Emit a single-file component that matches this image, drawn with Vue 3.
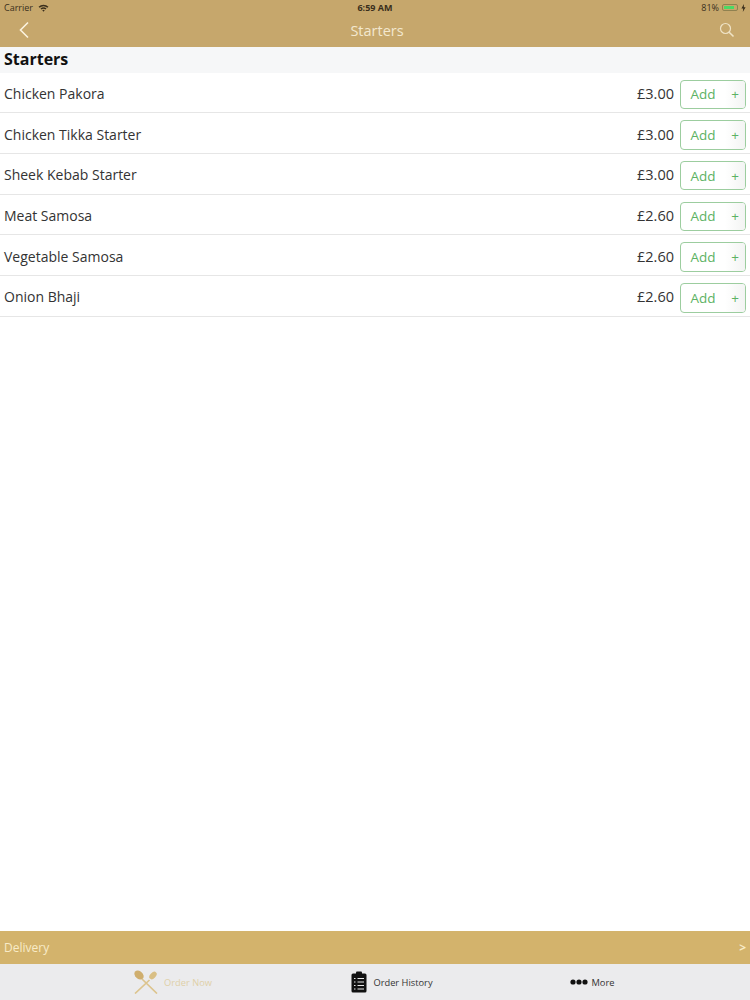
<template>
  <div class="screen">
    <header class="top">
      <div class="status">
        <div class="status-left">
          <span>Carrier</span>
          <svg class="wifi" width="11" height="8" viewBox="0 0 12 9">
            <path d="M0.4 3 A8 8 0 0 1 11.6 3 L10.3 4.3 A6.2 6.2 0 0 0 1.7 4.3 Z" fill="#3a2f1c" />
            <path d="M2.6 5.1 A5 5 0 0 1 9.4 5.1 L8.2 6.3 A3.3 3.3 0 0 0 3.8 6.3 Z" fill="#3a2f1c" />
            <path d="M4.6 7.1 A2 2 0 0 1 7.4 7.1 L6 8.6 Z" fill="#3a2f1c" />
          </svg>
        </div>
        <span class="clock">6:59 AM</span>
        <div class="status-right">
          <span>81%</span>
          <span class="battery"><span class="battery-fill"></span></span>
          <svg width="5" height="8" viewBox="0 0 5 8"><path d="M3 0 L0.4 4.6 H2.2 L1.8 8 L4.6 3.2 H2.8 Z" fill="#3a2f1c" /></svg>
        </div>
      </div>
      <div class="nav">
        <svg class="back" width="12" height="18" viewBox="0 0 12 18">
          <path d="M10 1.5 L2.5 9 L10 16.5" fill="none" stroke="#fbf3df" stroke-width="1.6" />
        </svg>
        <span class="nav-title">Starters</span>
        <svg class="search" width="16" height="16" viewBox="0 0 16 16">
          <circle cx="6.5" cy="6.5" r="5" fill="none" stroke="#efe3c6" stroke-width="1.2" />
          <path d="M10.2 10.2 L14.5 14.5" stroke="#efe3c6" stroke-width="1.6" />
        </svg>
      </div>
    </header>

    <main class="list">
      <h2 class="section">Starters</h2>
      <div v-for="item in items" :key="item.name" class="row">
        <span class="name">{{ item.name }}</span>
        <span class="price">£{{ item.price }}</span>
        <div class="add">
          <span class="add-label">Add</span>
          <span class="add-plus">+</span>
        </div>
      </div>
    </main>

    <div class="delivery">
      <span>Delivery</span>
      <span class="arrow">&gt;</span>
    </div>

    <nav class="tabs">
      <div class="tab tab-active">
        <svg width="24" height="24" viewBox="0 0 24 24">
          <path d="M1 23.5 L15.5 10 M23 23.5 L8 9" stroke="#dcc48e" stroke-width="1.7" />
          <ellipse cx="5" cy="5" rx="5.2" ry="3.8" transform="rotate(42 5 5)" fill="#cfae6e" />
          <ellipse cx="19" cy="5.5" rx="4.4" ry="2.8" transform="rotate(-45 19 5.5)" fill="#d9bf85" />
        </svg>
        <span>Order Now</span>
      </div>
      <div class="tab">
        <svg width="16" height="22" viewBox="0 0 16 22">
          <rect x="0.5" y="2.5" width="15" height="19" rx="1.5" fill="#111" />
          <rect x="5" y="0.5" width="6" height="3.5" rx="1" fill="#111" />
          <path d="M3 7.5 H4.5 M6.5 7.5 H13 M3 11 H4.5 M6.5 11 H13 M3 14.5 H4.5 M6.5 14.5 H13 M3 18 H4.5 M6.5 18 H13" stroke="#e8e8e8" stroke-width="1.1" />
        </svg>
        <span>Order History</span>
      </div>
      <div class="tab tab-more">
        <svg width="18" height="6" viewBox="0 0 18 6">
          <circle cx="3" cy="3" r="2.6" fill="#111" />
          <circle cx="9" cy="3" r="2.6" fill="#111" />
          <circle cx="15" cy="3" r="2.6" fill="#111" />
        </svg>
        <span>More</span>
      </div>
    </nav>
  </div>
</template>

<script setup>
const items = [
  { name: 'Chicken Pakora', price: '3.00' },
  { name: 'Chicken Tikka Starter', price: '3.00' },
  { name: 'Sheek Kebab Starter', price: '3.00' },
  { name: 'Meat Samosa', price: '2.60' },
  { name: 'Vegetable Samosa', price: '2.60' },
  { name: 'Onion Bhaji', price: '2.60' }
]
</script>

<style>
html, body { margin: 0; background: #fff; }
</style>

<style scoped>
.screen {
  width: 750px;
  height: 1000px;
  display: flex;
  flex-direction: column;
  font-family: "Open Sans", Lato, sans-serif;
  color: #333;
  overflow: hidden;
}

.top { height: 47px; background: #c6a76c; flex: none; }
.status {
  height: 15px;
  display: grid;
  grid-template-columns: 1fr auto 1fr;
  align-items: center;
  padding: 0 4px;
  font-size: 9px;
  color: #3a2f1c;
}
.status-left { display: flex; align-items: center; gap: 5px; }
.status-right { display: flex; align-items: center; justify-content: flex-end; gap: 3px; }
.clock { font-weight: 700; }
.battery {
  width: 16px;
  height: 7px;
  padding: 1px;
  border: 1px solid #8f8150;
  border-radius: 2px;
  box-sizing: border-box;
  display: flex;
}
.battery-fill { width: 81%; background: #4cd964; }

.nav {
  height: 32px;
  display: flex;
  align-items: center;
  justify-content: space-between;
  padding: 0 15px 2px 18px;
  box-sizing: border-box;
  position: relative;
}
.nav-title {
  position: absolute;
  left: 4px;
  right: 0;
  text-align: center;
  font-size: 14.5px;
  color: #f3e8cf;
}

.list { flex: 1; }
.section {
  margin: 0;
  height: 25.5px;
  line-height: 25px;
  padding-left: 4px;
  background: #f6f7f8;
  font-size: 16px;
  font-weight: 700;
  color: #111;
}
.row {
  height: 40.7px;
  box-sizing: border-box;
  display: flex;
  align-items: center;
  padding: 4px 4px 0;
  border-bottom: 1px solid #e6e6e6;
}
.name { flex: 1; font-size: 14px; color: #333; margin-bottom: 2px; }
.price { font-size: 14.5px; color: #333; margin: 0 6px 2px 0; }
.add {
  width: 66px;
  height: 29.5px;
  box-sizing: border-box;
  border: 1px solid #9ccd9f;
  border-radius: 4px;
  display: flex;
  align-items: center;
  overflow: hidden;
  font-size: 13.5px;
  color: #5cb263;
}
.add-label { flex: 1; text-align: center; }
.add-plus {
  width: 20px;
  height: 100%;
  display: flex;
  align-items: center;
  justify-content: center;
  background: linear-gradient(90deg, #fff, #f3f4f3);
}

.delivery {
  height: 33px;
  flex: none;
  display: flex;
  align-items: center;
  justify-content: space-between;
  padding: 0 4px;
  background: #d3b36c;
  font-size: 12px;
  color: #f8ebc8;
}
.arrow { font-weight: 700; }

.tabs {
  height: 36px;
  flex: none;
  display: grid;
  grid-template-columns: 346px 92px 1fr;
  background: #ebebed;
  font-size: 9.3px;
  color: #333;
}
.tab { display: flex; align-items: center; justify-content: center; gap: 6px; white-space: nowrap; }
.tab-active { color: #dfd0a8; }
.tab-more { gap: 4px; padding-right: 4px; }
</style>
